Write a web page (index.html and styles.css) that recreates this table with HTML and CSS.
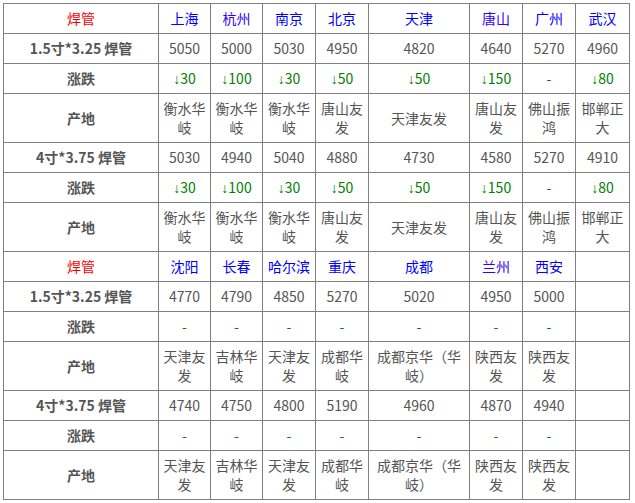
FILE: index.html
```html
<!DOCTYPE html>
<html lang="zh-CN">
<head>
<meta charset="utf-8">
<title>焊管价格</title>
<link rel="stylesheet" href="styles.css">
</head>
<body>
<div class="wrap">
<table class="price">
<colgroup>
<col class="c-label"><col class="c-52"><col class="c-52"><col class="c-53"><col class="c-53"><col class="c-101"><col class="c-53"><col class="c-53"><col class="c-54">
</colgroup>
<tbody>
<tr>
<td class="title">焊管</td>
<td class="city">上海</td><td class="city v">杭州</td><td class="city">南京</td><td class="city">北京</td><td class="city">天津</td><td class="city v">唐山</td><td class="city">广州</td><td class="city">武汉</td>
</tr>
<tr>
<td class="label">1.5寸*3.25 焊管</td>
<td>5050</td><td>5000</td><td>5030</td><td>4950</td><td>4820</td><td>4640</td><td>5270</td><td>4960</td>
</tr>
<tr>
<td class="label">涨跌</td>
<td class="chg"><span class="arr">↓</span>30</td><td class="chg"><span class="arr">↓</span>100</td><td class="chg"><span class="arr">↓</span>30</td><td class="chg"><span class="arr">↓</span>50</td><td class="chg"><span class="arr">↓</span>50</td><td class="chg"><span class="arr">↓</span>150</td><td class="chg">-</td><td class="chg"><span class="arr">↓</span>80</td>
</tr>
<tr>
<td class="label">产地</td>
<td>衡水华岐</td><td>衡水华岐</td><td>衡水华岐</td><td>唐山友发</td><td>天津友发</td><td>唐山友发</td><td>佛山振鸿</td><td>邯郸正大</td>
</tr>
<tr>
<td class="label">4寸*3.75 焊管</td>
<td>5030</td><td>4940</td><td>5040</td><td>4880</td><td>4730</td><td>4580</td><td>5270</td><td>4910</td>
</tr>
<tr>
<td class="label">涨跌</td>
<td class="chg"><span class="arr">↓</span>30</td><td class="chg"><span class="arr">↓</span>100</td><td class="chg"><span class="arr">↓</span>30</td><td class="chg"><span class="arr">↓</span>50</td><td class="chg"><span class="arr">↓</span>50</td><td class="chg"><span class="arr">↓</span>150</td><td class="chg">-</td><td class="chg"><span class="arr">↓</span>80</td>
</tr>
<tr>
<td class="label">产地</td>
<td>衡水华岐</td><td>衡水华岐</td><td>衡水华岐</td><td>唐山友发</td><td>天津友发</td><td>唐山友发</td><td>佛山振鸿</td><td>邯郸正大</td>
</tr>
<tr>
<td class="title">焊管</td>
<td class="city">沈阳</td><td class="city">长春</td><td class="city">哈尔滨</td><td class="city">重庆</td><td class="city">成都</td><td class="city v">兰州</td><td class="city">西安</td><td></td>
</tr>
<tr>
<td class="label">1.5寸*3.25 焊管</td>
<td>4770</td><td>4790</td><td>4850</td><td>5270</td><td>5020</td><td>4950</td><td>5000</td><td></td>
</tr>
<tr>
<td class="label">涨跌</td>
<td class="chg">-</td><td class="chg">-</td><td class="chg">-</td><td class="chg">-</td><td class="chg">-</td><td class="chg">-</td><td class="chg">-</td><td></td>
</tr>
<tr>
<td class="label">产地</td>
<td>天津友发</td><td>吉林华岐</td><td>天津友发</td><td>成都华岐</td><td>成都京华（华岐）</td><td>陕西友发</td><td>陕西友发</td><td></td>
</tr>
<tr>
<td class="label">4寸*3.75 焊管</td>
<td>4740</td><td>4750</td><td>4800</td><td>5190</td><td>4960</td><td>4870</td><td>4940</td><td></td>
</tr>
<tr>
<td class="label">涨跌</td>
<td class="chg">-</td><td class="chg">-</td><td class="chg">-</td><td class="chg">-</td><td class="chg">-</td><td class="chg">-</td><td class="chg">-</td><td></td>
</tr>
<tr>
<td class="label">产地</td>
<td>天津友发</td><td>吉林华岐</td><td>天津友发</td><td>成都华岐</td><td>成都京华（华岐）</td><td>陕西友发</td><td>陕西友发</td><td></td>
</tr>
</tbody>
</table>
</div>
</body>
</html>
```

FILE: styles.css
```css
html, body {
  margin: 0;
  padding: 0;
  background: #fff;
}
.wrap {
  padding: 3px;
}
.price {
  border-collapse: collapse;
  table-layout: fixed;
  width: 627px;
  border: 1px solid #222;
  font-family: "Noto Sans CJK SC", "Noto Sans", sans-serif;
  font-size: 14px;
  color: #555;
}
.c-label { width: 155px; }
.c-52 { width: 52px; }
.c-53 { width: 53px; }
.c-54 { width: 54px; }
.c-101 { width: 101px; }
.price td {
  border: 1px solid #808080;
  text-align: center;
  vertical-align: middle;
  line-height: 19px;
  height: 19px;
  padding: 5px 3px;
  word-break: break-all;
  overflow: hidden;
}
.price td.title {
  color: #ff0000;
}
.price td.city {
  color: #0000ff;
}
.price td.city.v {
  color: #3300ff;
}
.price td.label {
  font-weight: bold;
}
.price td.chg {
  color: #008000;
}
.arr {
  font-family: "Liberation Sans", "DejaVu Sans", sans-serif;
  line-height: 1;
}
```
